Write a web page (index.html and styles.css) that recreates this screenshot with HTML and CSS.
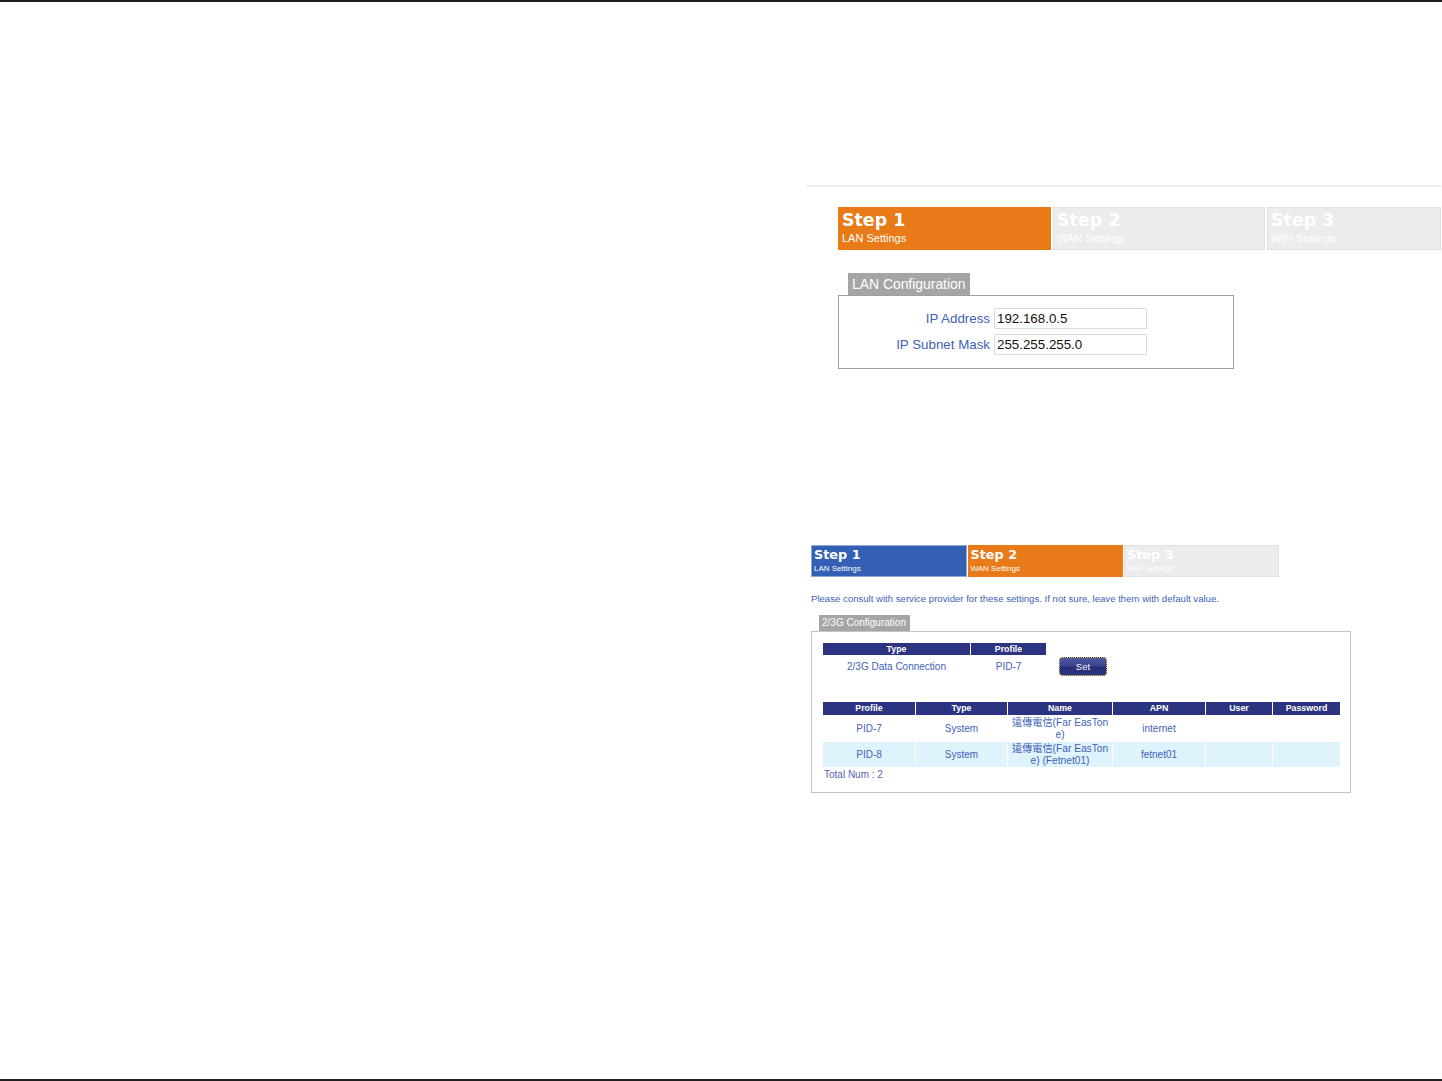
FILE: index.html
```html
<!DOCTYPE html>
<html lang="en">
<head>
<meta charset="utf-8">
<title>Setup Wizard</title>
<link rel="stylesheet" href="styles.css">
</head>
<body>
<main class="page">
  <section class="fig-one">
    <div class="steps steps-large">
      <div class="step step-current step-a"><b>Step 1</b><span>LAN Settings</span></div>
      <div class="step step-todo step-b"><b>Step 2</b><span>WAN Settings</span></div>
      <div class="step step-todo step-c"><b>Step 3</b><span>WiFi Settings</span></div>
    </div>
    <div class="tab tab-large">LAN Configuration</div>
    <div class="box box-large">
      <div class="field"><label>IP Address</label><div class="input">192.168.0.5</div></div>
      <div class="field"><label>IP Subnet Mask</label><div class="input">255.255.255.0</div></div>
    </div>
  </section>
  <section class="fig-two">
    <div class="steps steps-small">
      <div class="step step-done"><b>Step 1</b><span>LAN Settings</span></div>
      <div class="step step-current"><b>Step 2</b><span>WAN Settings</span></div>
      <div class="step step-todo step-end"><b>Step 3</b><span>WiFi Settings</span></div>
    </div>
    <p class="hint">Please consult with service provider for these settings. If not sure, leave them with default value.</p>
    <div class="tab tab-small">2/3G Configuration</div>
    <div class="box box-small">
      <div class="current-row">
        <table class="grid grid-current">
          <thead><tr><th class="w-type">Type</th><th class="w-profile">Profile</th></tr></thead>
          <tbody><tr><td>2/3G Data Connection</td><td>PID-7</td></tr></tbody>
        </table>
        <div class="set-btn">Set</div>
      </div>
      <table class="grid grid-list">
        <thead>
          <tr><th class="c1">Profile</th><th class="c2">Type</th><th class="c3">Name</th><th class="c4">APN</th><th class="c5">User</th><th class="c6">Password</th></tr>
        </thead>
        <tbody>
          <tr class="row"><td>PID-7</td><td>System</td><td class="name">遠傳電信(Far EasTon<br>e)</td><td>internet</td><td></td><td class="last"></td></tr>
          <tr class="alt"><td>PID-8</td><td>System</td><td class="name">遠傳電信(Far EasTon<br>e) (Fetnet01)</td><td>fetnet01</td><td></td><td class="last"></td></tr>
        </tbody>
      </table>
      <div class="total">Total Num : 2</div>
    </div>
  </section>
</main>
</body>
</html>
```
FILE: styles.css
```css
* { box-sizing: border-box; }
html, body { margin: 0; padding: 0; }
body {
  background: #fff;
  font-family: "Liberation Sans", "Noto Sans CJK TC", sans-serif;
  overflow: hidden;
}
.page {
  height: 1081px;
  border-top: 2px solid #231f20;
  border-bottom: 2px solid #231f20;
  padding-top: 183px;
}
.fig-one {
  margin: 0 1px 0 806px;
  border-top: 2px solid #eeeeee;
  padding: 20px 0 0 32px;
  height: 360px;
}
.fig-two { margin-left: 811px; width: 540px; }

.steps { display: flex; }
.step { display: flex; flex-direction: column; color: #fff; }
.step b { font-family: "DejaVu Sans", sans-serif; font-weight: 700; }
.step-current { background: #e97a18; }
.step-done { background: #335fb4; box-shadow: inset 0 0 0 1px #8fa8d8; }
.step-todo { background: #ececec; box-shadow: inset 0 0 0 1px #e0e0e0; }

.steps-large { height: 43px; gap: 2px; }
.steps-large .step { padding: 0 4px; }
.steps-large b { font-size: 17.4px; line-height: 26px; }
.steps-large span { font-size: 11px; line-height: 10px; }
.step-a { width: 213px; }
.step-b { width: 212px; }
.step-c { width: 174px; }

.steps-small { height: 32px; gap: 1px; }
.steps-small .step { width: 155.5px; padding: 0 3px; }
.steps-small .step-end { width: 155px; }
.steps-small b { font-size: 12.8px; line-height: 19px; }
.steps-small span { font-size: 8px; line-height: 9px; }

.tab { background: #a5a5a5; color: #fff; }
.tab-large {
  width: 122px;
  height: 22px;
  margin: 23px 0 0 10px;
  padding-left: 4px;
  font-size: 13.9px;
  line-height: 22px;
}
.tab-small {
  width: 91px;
  height: 16px;
  margin: 0 0 0 8px;
  padding-left: 3px;
  font-size: 10px;
  line-height: 15px;
}
.box { background: #fff; }
.box-large {
  width: 396px;
  height: 74px;
  border: 1px solid #a0a0a0;
  padding-top: 12px;
  display: flex;
  flex-direction: column;
  gap: 5px;
}
.field { display: flex; align-items: center; height: 21px; }
.field label {
  width: 151px;
  text-align: right;
  font-size: 13.33px;
  color: #3f5fb8;
}
.input {
  width: 153px;
  height: 21px;
  margin-left: 4px;
  padding-left: 2px;
  border: 1px solid #d8dbe6;
  border-radius: 1px;
  font-size: 13.33px;
  line-height: 19px;
  color: #111;
}
.hint {
  margin: 16px 0 10px;
  font-size: 9.6px;
  line-height: 12px;
  color: #3f5fb8;
  white-space: nowrap;
}
.box-small {
  width: 540px;
  height: 162px;
  border: 1px solid #c4c4c4;
  padding: 11px 0 0 11px;
}
.current-row { display: flex; align-items: flex-start; height: 59px; }
.grid { border-collapse: separate; border-spacing: 0; table-layout: fixed; }
.grid th {
  background: #2c3481;
  color: #fff;
  font-size: 8.8px;
  font-weight: 700;
  padding: 0;
  border-right: 1px solid #fff;
}
.grid td {
  padding: 0;
  font-size: 10px;
  line-height: 12px;
  text-align: center;
  color: #3f5fb8;
  border-right: 1px solid #fff;
}
.grid td.name { font-size: 10.2px; }
.grid td.last, .grid-list th.c6 { border-right: 0; }
.grid-current { width: 224px; }
.grid-current th { height: 12px; line-height: 12px; }
.grid-current td { height: 23px; }
.w-type { width: 148px; }
.w-profile { width: 76px; }
.grid-list { width: 517px; }
.grid-list th { height: 13px; line-height: 13px; }
.row { height: 27px; }
.alt { height: 25px; }
.alt td { background: #dff3fc; }
.c1 { width: 93px; }
.c2 { width: 92px; }
.c3 { width: 105px; }
.c4 { width: 93px; }
.c5 { width: 67px; }
.c6 { width: 67px; }
.set-btn {
  width: 48px;
  height: 19px;
  margin: 14px 0 0 12px;
  border: 1px dotted #e6d24a;
  border-radius: 4px;
  background: linear-gradient(#4d569f 0, #3c4592 45%, #262d78 55%, #2c3481 100%);
  color: #fff;
  font-size: 9.5px;
  line-height: 17px;
  text-align: center;
}
.total {
  margin: 2px 0 0 1px;
  font-size: 10px;
  line-height: 12px;
  color: #5563b0;
}
```
